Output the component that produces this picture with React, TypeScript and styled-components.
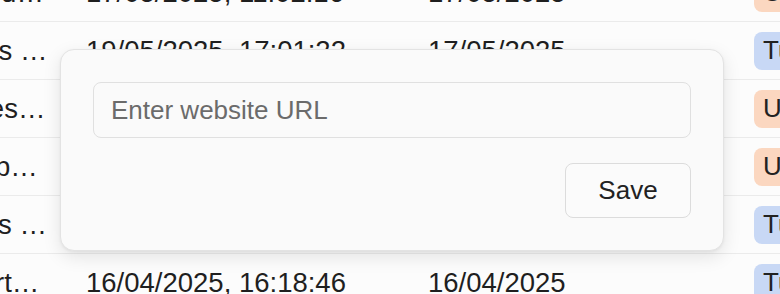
import React from 'react';
import styled, { createGlobalStyle } from 'styled-components';

type Kind = 'usecase' | 'tutorial';

const rows: { title: string; created: string; published: string; kind: Kind; label: string }[] = [
  { title: 'Getting started with Fiverr', created: '17/05/2025, 11:02:16', published: '17/05/2025', kind: 'usecase', label: 'Use case' },
  { title: 'Tips and tricks for teams', created: '19/05/2025, 17:01:22', published: '17/05/2025', kind: 'tutorial', label: 'Tutorial' },
  { title: 'New templates and themes', created: '18/05/2025, 09:44:10', published: '18/05/2025', kind: 'usecase', label: 'Use case' },
  { title: 'Account setups explained', created: '02/05/2025, 13:27:58', published: '02/05/2025', kind: 'usecase', label: 'Use case' },
  { title: 'Release notes for May', created: '24/04/2025, 10:05:33', published: '24/04/2025', kind: 'tutorial', label: 'Tutorial' },
  { title: 'Monthly reports overview', created: '16/04/2025, 16:18:46', published: '16/04/2025', kind: 'tutorial', label: 'Tutorial' },
];

const GlobalStyle = createGlobalStyle`
  html, body {
    margin: 0;
    padding: 0;
    background: #fcfcfc;
    font-family: "Liberation Sans", Arial, Helvetica, sans-serif;
    color: #1f1f1f;
    overflow: hidden;
  }
`;

const Page = styled.div`
  position: relative;
  width: 780px;
  height: 294px;
  overflow: hidden;
`;

// table is scrolled: first column is partly off-screen, first row cut at the top
const Table = styled.div`
  display: grid;
  grid-template-columns: 250px 342px 326px 160px;
  margin-left: -180px;
  margin-top: -36px;
`;

const Row = styled.div`
  display: contents;
`;

const Cell = styled.div<{ $title?: boolean }>`
  height: 58px;
  box-sizing: border-box;
  padding: 0 ${(p) => (p.$title ? '21.5px' : '16px')} 0 16px;
  display: flex;
  align-items: center;
  border-bottom: 1px solid #ebebeb;
  font-size: 27.5px;
  white-space: nowrap;
  overflow: hidden;
  min-width: 0;
`;

const Title = styled.span`
  display: block;
  overflow: hidden;
  text-overflow: ellipsis;
  white-space: nowrap;
  width: 100%;
`;

const Badge = styled.span<{ $kind: Kind }>`
  display: inline-flex;
  align-items: center;
  height: 38px;
  padding: 0 9px;
  border-radius: 8px;
  font-size: 26px;
  color: #222;
  background: ${(p) => (p.$kind === 'tutorial' ? '#c8d8f5' : '#fbd7c0')};
`;

const Popover = styled.div`
  position: absolute;
  left: 60px;
  top: 49px;
  width: 664px;
  box-sizing: border-box;
  padding: 32px;
  background: #fafafa;
  border: 1px solid #e3e3e3;
  border-radius: 14px;
  box-shadow: 0 6px 18px rgba(0, 0, 0, 0.1), 0 1px 3px rgba(0, 0, 0, 0.05);
  display: flex;
  flex-direction: column;
  gap: 25px;
`;

const UrlInput = styled.input`
  height: 56px;
  box-sizing: border-box;
  width: 100%;
  padding: 0 17px;
  border: 1.5px solid #e0e0e0;
  border-radius: 8px;
  background: #fafafa;
  font-family: inherit;
  font-size: 26px;
  color: #222;
  outline: none;

  &::placeholder {
    color: #6b6b6b;
  }
`;

const Actions = styled.div`
  display: flex;
  justify-content: flex-end;
`;

const SaveButton = styled.button`
  width: 126px;
  height: 55px;
  border: 1.5px solid #dcdcdc;
  border-radius: 8px;
  background: #fbfbfb;
  font-family: inherit;
  font-size: 26px;
  color: #222;
  cursor: pointer;
`;

export default function App() {
  return (
    <>
      <GlobalStyle />
      <Page>
        <Table>
          {rows.map((r) => (
            <Row key={r.created}>
              <Cell $title>
                <Title>{r.title}</Title>
              </Cell>
              <Cell>{r.created}</Cell>
              <Cell>{r.published}</Cell>
              <Cell>
                <Badge $kind={r.kind}>{r.label}</Badge>
              </Cell>
            </Row>
          ))}
        </Table>

        <Popover>
          <UrlInput placeholder="Enter website URL" />
          <Actions>
            <SaveButton>Save</SaveButton>
          </Actions>
        </Popover>
      </Page>
    </>
  );
}
